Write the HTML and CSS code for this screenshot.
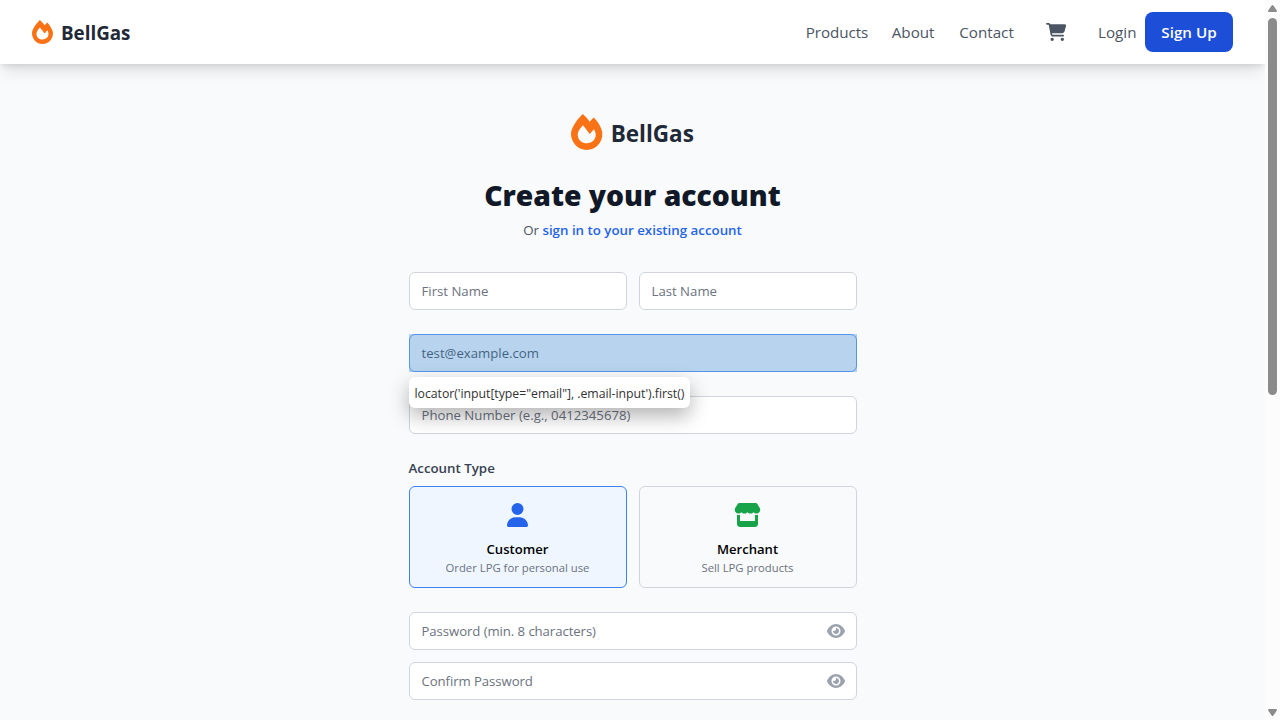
FILE: index.html
```html
<!DOCTYPE html>
<html lang="en">
<head>
<meta charset="utf-8">
<title>BellGas - Create your account</title>
<link rel="stylesheet" href="styles.css">
</head>
<body>
<svg class="sprite" aria-hidden="true">
  <symbol id="fire" viewBox="0 0 448 512"><path d="M323.56 51.2c-20.8 19.3-39.58 39.59-56.22 59.97C240.08 73.62 206.28 35.53 168 0 69.74 91.17 0 209.96 0 281.6 0 408.85 100.29 512 224 512s224-103.15 224-230.4c0-53.27-51.98-163.14-124.44-230.4zm-19.47 340.65C282.43 407.01 255.72 416 226.86 416 154.71 416 96 368.26 96 290.75c0-38.61 24.31-72.63 72.79-130.75 6.93 7.98 98.83 125.34 98.83 125.34l58.63-66.88c4.14 6.85 7.91 13.55 11.27 19.97 27.35 52.19 15.81 118.97-33.43 153.42z"/></symbol>
  <symbol id="eye" viewBox="0 0 576 512"><path d="M288 32c-80.8 0-145.5 36.8-192.6 80.6C48.6 156 17.3 208 2.5 243.7c-3.3 7.9-3.3 16.7 0 24.6C17.3 304 48.6 356 95.4 399.4C142.5 443.2 207.2 480 288 480s145.5-36.8 192.6-80.6c46.8-43.5 78.1-95.4 93-131.1c3.3-7.9 3.3-16.7 0-24.6c-14.9-35.7-46.2-87.7-93-131.1C433.5 68.8 368.8 32 288 32zM144 256a144 144 0 1 1 288 0 144 144 0 1 1 -288 0zm144-64c0 35.3-28.7 64-64 64c-7.1 0-13.9-1.2-20.3-3.3c-5.5-1.8-11.9 1.6-11.7 7.4c.3 6.9 1.3 13.8 3.2 20.7c13.7 51.2 66.4 81.6 117.6 67.9s81.6-66.4 67.9-117.6c-11.1-41.5-47.8-69.4-88.6-71.1c-5.8-.2-9.2 6.1-7.4 11.7c2.1 6.4 3.3 13.2 3.3 20.3z"/></symbol>
</svg>
<div class="window">
  <div class="page">
    <header class="navbar">
      <a class="brand"><svg class="brand-icon"><use href="#fire"/></svg><span>BellGas</span></a>
      <nav class="links">
        <a class="products">Products</a>
        <a class="about">About</a>
        <a class="contact">Contact</a>
        <svg class="cart" viewBox="0 0 576 512"><path d="M0 24C0 10.7 10.7 0 24 0L69.5 0c22 0 41.5 12.8 50.6 32l411 0c26.3 0 45.5 25 38.6 50.4l-41 152.3c-8.5 31.4-37 53.3-69.5 53.3l-288.5 0 5.4 28.5c2.2 11.3 12.1 19.5 23.6 19.5L488 336c13.3 0 24 10.7 24 24s-10.7 24-24 24l-288.3 0c-34.6 0-64.3-24.6-70.7-58.5L77.4 54.5c-.7-3.8-4-6.5-7.9-6.5L24 48C10.7 48 0 37.3 0 24zM128 464a48 48 0 1 1 96 0 48 48 0 1 1 -96 0zm336-48a48 48 0 1 1 0 96 48 48 0 1 1 0-96z"/></svg>
        <a class="login">Login</a>
        <a class="signup">Sign Up</a>
      </nav>
    </header>
    <main class="content">
      <div class="logo"><svg class="logo-icon"><use href="#fire"/></svg><span>BellGas</span></div>
      <h2 class="title">Create your account</h2>
      <p class="subtitle">Or <a class="signin">sign in to your existing account</a></p>
      <form class="form">
        <div class="pair">
          <div class="field">First Name</div>
          <div class="field">Last Name</div>
        </div>
        <div class="email">
          <div class="field focused">test@example.com</div>
          <div class="highlight"></div>
          <div class="tooltip">locator('input[type="email"], .email-input').first()</div>
        </div>
        <div class="field">Phone Number (e.g., 0412345678)</div>
        <div class="account">
          <div class="label">Account Type</div>
          <div class="pair">
            <div class="option selected">
              <svg class="user" viewBox="0 0 448 512"><path d="M224 256A128 128 0 1 0 224 0a128 128 0 1 0 0 256zm-45.7 48C79.8 304 0 383.8 0 482.3C0 498.7 13.3 512 29.7 512l388.6 0c16.4 0 29.7-13.3 29.7-29.7C448 383.8 368.2 304 269.7 304l-91.4 0z"/></svg>
              <div class="option-name">Customer</div>
              <div class="option-note">Order LPG for personal use</div>
            </div>
            <div class="option">
              <svg class="store" viewBox="0 0 576 512"><path d="M547.6 103.8L490.3 13.1C485.2 5 476.1 0 466.4 0L109.6 0C99.9 0 90.8 5 85.7 13.1L28.3 103.8c-29.6 46.8-3.4 111.9 51.9 119.4c4 .5 8.1 .8 12.1 .8c26.1 0 49.3-11.4 65.2-29c15.9 17.6 39.1 29 65.2 29c26.1 0 49.3-11.4 65.2-29c15.9 17.6 39.1 29 65.2 29c26.2 0 49.3-11.4 65.2-29c16 17.6 39.1 29 65.2 29c4.1 0 8.1-.3 12.1-.8c55.5-7.4 81.8-72.5 52.1-119.4zM499.7 254.9l-.2 0c-5.3 .7-10.7 1.1-16.2 1.1c-12.4 0-24.3-1.9-35.4-5.3L448 384l-320 0 0-133.4c-11.2 3.5-23.2 5.4-35.6 5.4c-5.5 0-11-.4-16.3-1.1l-.1 0c-4.1-.6-8.1-1.3-12-2.3L64 384l0 64c0 35.3 28.7 64 64 64l320 0c35.3 0 64-28.7 64-64l0-64 0-131.4c-4 1-8 1.8-12.3 2.3z"/></svg>
              <div class="option-name">Merchant</div>
              <div class="option-note">Sell LPG products</div>
            </div>
          </div>
        </div>
        <div class="passwords">
          <div class="field">Password (min. 8 characters)<svg class="eye"><use href="#eye"/></svg></div>
          <div class="field">Confirm Password<svg class="eye"><use href="#eye"/></svg></div>
        </div>
      </form>
    </main>
  </div>
  <div class="scrollbar">
    <svg class="arrow" viewBox="0 0 9 7"><path d="M4.5 0Q5 0 5.4.6L8.8 5.5Q9.2 7 8 7H1Q-.2 7 .2 5.5L3.6.6Q4 0 4.5 0z"/></svg>
    <div class="track"><div class="thumb"></div></div>
    <svg class="arrow" viewBox="0 0 9 7"><path d="M4.5 7Q5 7 5.4 6.4L8.8 1.5Q9.2 0 8 0H1Q-.2 0 .2 1.5L3.6 6.4Q4 7 4.5 7z"/></svg>
  </div>
</div>
</body>
</html>
```
FILE: styles.css
```css
* { box-sizing: border-box; }
body {
  margin: 0;
  height: 720px;
  overflow: hidden;
  font-family: "Open Sans", "Noto Sans", sans-serif;
  background: #f9fafb;
  color: #000;
}
svg { display: block; flex: none; fill: currentColor; }
.sprite { position: absolute; width: 0; height: 0; }
.window { display: flex; width: 1280px; height: 720px; }
.page {
  width: 1265px;
  height: 720px;
  overflow: hidden;
  background: #f9fafb;
}
.navbar {
  display: flex;
  align-items: center;
  justify-content: space-between;
  height: 64px;
  padding: 0 32px;
  background: #fff;
  box-shadow: 0 10px 15px -3px rgba(0, 0, 0, .1), 0 4px 6px -2px rgba(0, 0, 0, .1);
}
.brand {
  display: flex;
  align-items: center;
  gap: 8px;
  font-size: 18.8px;
  font-weight: 700;
  line-height: 28px;
  color: #1f2937;
}
.brand span { padding-top: 1px; }
.brand-icon { width: 21px; height: 24px; color: #f97316; }
.links {
  display: flex;
  align-items: center;
  font-size: 15.2px;
  line-height: 24px;
  color: #4b5563;
  white-space: nowrap;
}
.products { width: 86px; letter-spacing: -.08px; }
.about { width: 67.5px; }
.contact { width: 86.5px; }
.cart { width: 20.25px; height: 18px; margin-right: 32px; }
.login { width: 47px; }
.signup {
  width: 88px;
  height: 40px;
  border-radius: 8px;
  background: #1d4ed8;
  color: #fff;
  font-size: 15.2px;
  font-weight: 600;
  line-height: 41px;
  text-align: center;
}
.content {
  display: flex;
  flex-direction: column;
  align-items: center;
  padding-top: 48px;
}
.logo {
  display: flex;
  align-items: center;
  gap: 8px;
  height: 40px;
  font-size: 22.5px;
  font-weight: 700;
  line-height: 32px;
  color: #1f2937;
}
.logo span { padding-top: 4px; }
.logo-icon { width: 31.5px; height: 36px; color: #f97316; }
.title {
  margin: 24px 0 8px;
  padding-top: 1px;
  height: 36px;
  font-size: 28.3px;
  font-weight: 800;
  line-height: 37px;
  color: #111827;
}
.subtitle {
  margin: 0 0 32px;
  font-size: 13.3px;
  line-height: 20px;
  color: #4b5563;
}
.signin { font-weight: 600; color: #2563eb; }
.form { display: flex; flex-direction: column; gap: 24px; width: 448px; }
.pair { display: grid; grid-template-columns: 1fr 1fr; gap: 12px; }
.field {
  display: flex;
  align-items: center;
  justify-content: space-between;
  height: 38px;
  padding: 0 11px 0 12px;
  border: 1px solid #d1d5db;
  border-radius: 6px;
  background: #fff;
  font-size: 13.2px;
  line-height: 20px;
  color: #6b7280;
}
.focused { border-color: #3b82f6; color: #111827; }
.email { position: relative; }
.highlight { position: absolute; inset: 0; background: rgba(111, 168, 220, .5); }
.tooltip {
  position: absolute;
  top: 43px;
  left: 0;
  width: 281px;
  height: 31px;
  padding-left: 6px;
  border-radius: 6px;
  background: #fff;
  box-shadow: 0 8px 20px rgba(0, 0, 0, .3);
  font-size: 12.3px;
  line-height: 34px;
  letter-spacing: -.04px;
  color: #333;
  white-space: nowrap;
}
.label {
  margin-bottom: 8px;
  font-size: 13.3px;
  font-weight: 600;
  line-height: 20px;
  color: #374151;
}
.option {
  display: flex;
  flex-direction: column;
  align-items: center;
  height: 102px;
  padding-top: 16px;
  border: 1px solid #d1d5db;
  border-radius: 6px;
}
.selected { border-color: #3b82f6; background: #eff6ff; }
.user { width: 21px; height: 24px; color: #2563eb; }
.store { width: 27px; height: 24px; color: #16a34a; }
.option-name { margin-top: 12px; font-size: 13.1px; font-weight: 600; line-height: 20px; }
.option-note { padding-top: 1px; font-size: 11.3px; line-height: 16px; color: #6b7280; }
.passwords { display: flex; flex-direction: column; gap: 12px; }
.passwords .field { letter-spacing: -.08px; }
.eye { width: 18px; height: 16px; color: #9ca3af; }
.scrollbar {
  display: flex;
  flex-direction: column;
  align-items: center;
  width: 15px;
  height: 720px;
  padding: 5px 0 4px;
  background: #fcfcfc;
  color: #8b8b8b;
}
.arrow { width: 9px; height: 7px; }
.track { flex: 1; padding-top: 6px; }
.thumb { width: 9px; height: 377px; border-radius: 5px; background: #8b8b8b; }
```
